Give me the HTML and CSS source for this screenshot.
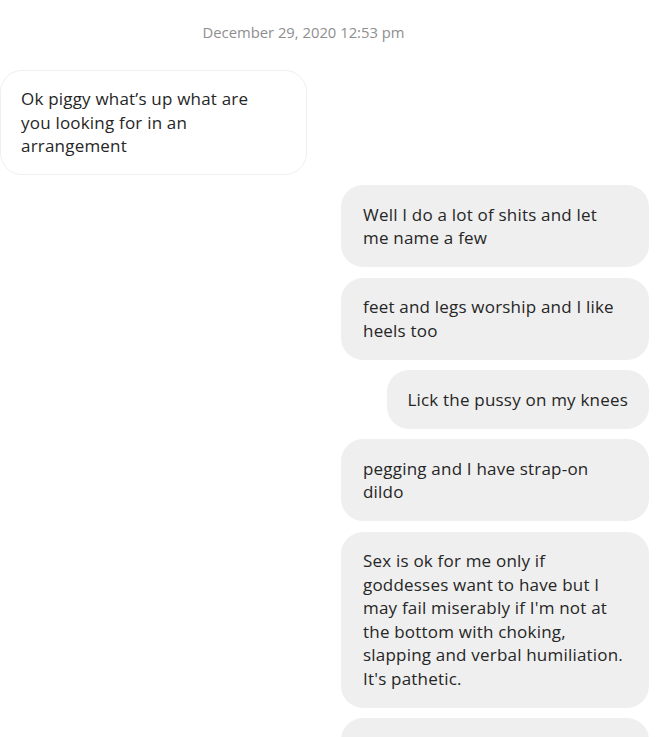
FILE: index.html
```html
<!DOCTYPE html>
<html>
<head>
<meta charset="utf-8">
<link rel="stylesheet" href="styles.css">
</head>
<body>
<div class="thread">
  <div class="stamp">December 29, 2020 12:53 pm</div>
  <div class="row in">
    <div class="bubble received multi">Ok piggy what’s up what are<br>you looking for in an<br>arrangement</div>
  </div>
  <div class="row out">
    <div class="bubble sent multi">Well I do a lot of shits and let<br>me name a few</div>
  </div>
  <div class="row out">
    <div class="bubble sent multi">feet and legs worship and I like<br>heels too</div>
  </div>
  <div class="row out">
    <div class="bubble sent">Lick the pussy on my knees</div>
  </div>
  <div class="row out">
    <div class="bubble sent multi">pegging and I have strap-on<br>dildo</div>
  </div>
  <div class="row out">
    <div class="bubble sent multi">Sex is ok for me only if<br>goddesses want to have but I<br>may fail miserably if I'm not at<br>the bottom with choking,<br>slapping and verbal humiliation.<br>It's pathetic.</div>
  </div>
  <div class="row out">
    <div class="bubble sent multi tail">&nbsp;</div>
  </div>
</div>
</body>
</html>
```
FILE: styles.css
```css
html, body {
  margin: 0;
  padding: 0;
  background: #ffffff;
  overflow: hidden;
}
.thread {
  display: flex;
  flex-direction: column;
  box-sizing: border-box;
  height: 737px;
  overflow: hidden;
  padding: 0 9px 0 0;
  font-family: "Open Sans", "Noto Sans", sans-serif;
  color: #262626;
}
.stamp {
  text-align: center;
  font-size: 14.8px;
  color: #8e8e8e;
  padding-right: 42px;
  margin-top: 23px;
  line-height: 18px;
  margin-bottom: 29px;
}
.row {
  display: flex;
  flex-shrink: 0;
  margin-bottom: 10.5px;
}
.row.in {
  justify-content: flex-start;
}
.row.out {
  justify-content: flex-end;
}
.bubble {
  box-sizing: border-box;
  max-width: 308px;
  padding: 17.5px 21px 17.5px 22px;
  border-radius: 22px;
  font-size: 17px;
  letter-spacing: 0.2px;
  line-height: 23.5px;
  white-space: nowrap;
}
.multi {
  width: 308px;
}
.received {
  background: #ffffff;
  border: 1px solid #efefef;
  width: 307px;
  padding: 16px 21px 16px 20px;
}
.sent {
  background: #efefef;
}
.sent:not(.multi) {
  padding-left: 20px;
}
.tail {
  height: 80px;
}
```
